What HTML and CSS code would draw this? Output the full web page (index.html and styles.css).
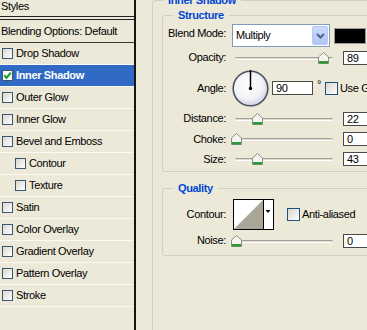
FILE: index.html
```html
<!DOCTYPE html>
<html>
<head>
<meta charset="utf-8">
<link rel="stylesheet" href="styles.css">
</head>
<body>
<div class="dlg">
  <div class="side">
    <div class="side-hdr">Styles</div>
    <ul class="list">
      <li class="row blend">Blending Options: Default</li>
      <li class="row"><span class="cb"></span>Drop Shadow</li>
      <li class="row sel"><span class="cb on"><svg width="9" height="9" viewBox="0 0 9 9"><path d="M1.2 4.2L3.6 6.8L7.8 1.6" fill="none" stroke="#22a022" stroke-width="2.2"/></svg></span>Inner Shadow</li>
      <li class="row"><span class="cb"></span>Outer Glow</li>
      <li class="row"><span class="cb"></span>Inner Glow</li>
      <li class="row"><span class="cb"></span>Bevel and Emboss</li>
      <li class="row sub"><span class="cb"></span>Contour</li>
      <li class="row sub"><span class="cb"></span>Texture</li>
      <li class="row"><span class="cb"></span>Satin</li>
      <li class="row"><span class="cb"></span>Color Overlay</li>
      <li class="row"><span class="cb"></span>Gradient Overlay</li>
      <li class="row"><span class="cb"></span>Pattern Overlay</li>
      <li class="row"><span class="cb"></span>Stroke</li>
    </ul>
  </div>
  <div class="main">
    <fieldset class="grp outer">
      <legend>Inner Shadow</legend>
      <fieldset class="grp struct">
        <legend>Structure</legend>
        <div class="frow r-blend">
          <span class="lbl">Blend Mode:</span>
          <div class="select"><span class="sel-val">Multiply</span><span class="sel-btn"><svg width="9" height="6" viewBox="0 0 9 6"><path d="M1 1L4.5 4.5L8 1" fill="none" stroke="#4d6185" stroke-width="2"/></svg></span></div>
          <span class="swatch"></span>
        </div>
        <div class="frow h21">
          <span class="lbl">Opacity:</span>
          <div class="slider"><div class="track"></div><span class="thumb" style="left:87px"><svg width="11" height="12" viewBox="0 0 11 12"><path d="M0.5 11.5V5L5.5 0.5L10.5 5V11.5Z" fill="#f5f5ef" stroke="#8c8c84"/><rect x="1" y="9" width="9" height="2.5" fill="#2e9a3a"/></svg></span></div>
          <span class="num">89</span>
        </div>
        <div class="frow h40">
          <span class="lbl">Angle:</span>
          <svg class="dial" width="37" height="37" viewBox="0 0 37 37"><defs><radialGradient id="dg" cx="45%" cy="42%" r="62%"><stop offset="0" stop-color="#ffffff"/><stop offset="0.65" stop-color="#f2f2f6"/><stop offset="1" stop-color="#c3c8da"/></radialGradient></defs><circle cx="18.5" cy="18.5" r="17.3" fill="url(#dg)" stroke="#4a5063" stroke-width="1.6"/><line x1="18.5" y1="18.5" x2="18.5" y2="0" stroke="#000" stroke-width="1.5"/><circle cx="18.5" cy="18.5" r="1.7" fill="#000"/></svg>
          <span class="num angle">90</span>
          <span class="deg">°</span>
          <span class="cb13"></span>
          <span class="cbl">Use Global Light</span>
        </div>
        <div class="frow h21">
          <span class="lbl">Distance:</span>
          <div class="slider"><div class="track"></div><span class="thumb" style="left:21px"><svg width="11" height="12" viewBox="0 0 11 12"><path d="M0.5 11.5V5L5.5 0.5L10.5 5V11.5Z" fill="#f5f5ef" stroke="#8c8c84"/><rect x="1" y="9" width="9" height="2.5" fill="#2e9a3a"/></svg></span></div>
          <span class="num">22</span>
        </div>
        <div class="frow h20">
          <span class="lbl">Choke:</span>
          <div class="slider"><div class="track"></div><span class="thumb" style="left:0px"><svg width="11" height="12" viewBox="0 0 11 12"><path d="M0.5 11.5V5L5.5 0.5L10.5 5V11.5Z" fill="#f5f5ef" stroke="#8c8c84"/><rect x="1" y="9" width="9" height="2.5" fill="#2e9a3a"/></svg></span></div>
          <span class="num">0</span>
        </div>
        <div class="frow h20">
          <span class="lbl">Size:</span>
          <div class="slider"><div class="track"></div><span class="thumb" style="left:21px"><svg width="11" height="12" viewBox="0 0 11 12"><path d="M0.5 11.5V5L5.5 0.5L10.5 5V11.5Z" fill="#f5f5ef" stroke="#8c8c84"/><rect x="1" y="9" width="9" height="2.5" fill="#2e9a3a"/></svg></span></div>
          <span class="num">43</span>
        </div>
      </fieldset>
      <fieldset class="grp quality">
        <legend>Quality</legend>
        <div class="frow h31">
          <span class="lbl">Contour:</span>
          <svg class="contour" width="41" height="31" viewBox="0 0 41 31"><rect x="0.5" y="0.5" width="40" height="30" fill="#fff" stroke="#000"/><polygon points="1,30 30,1 30,30" fill="#a9a597"/><line x1="30.5" y1="0" x2="30.5" y2="31" stroke="#000"/><polygon points="32.5,11 37.5,11 35,14" fill="#000"/></svg>
          <span class="cb13 aa"></span>
          <span class="cbl">Anti-aliased</span>
        </div>
        <div class="frow h21">
          <span class="lbl">Noise:</span>
          <div class="slider"><div class="track"></div><span class="thumb" style="left:0px"><svg width="11" height="12" viewBox="0 0 11 12"><path d="M0.5 11.5V5L5.5 0.5L10.5 5V11.5Z" fill="#f5f5ef" stroke="#8c8c84"/><rect x="1" y="9" width="9" height="2.5" fill="#2e9a3a"/></svg></span></div>
          <span class="num">0</span>
        </div>
      </fieldset>
    </fieldset>
  </div>
</div>
</body>
</html>
```

FILE: styles.css
```css
* { box-sizing: border-box; }
html, body { margin: 0; padding: 0; }
body {
  width: 367px;
  height: 330px;
  overflow: hidden;
  background: #ECE9D8;
  font-family: "Liberation Sans", Arial, sans-serif;
  font-size: 11px;
  line-height: 13px;
  letter-spacing: -0.35px;
  color: #000;
}
.dlg { display: flex; height: 330px; }

/* left styles list */
.side { width: 136px; flex: none; border-right: 2px solid #151515; }
.side-hdr { height: 17px; line-height: 12px; padding-left: 1px; border-bottom: 1px solid #222; }
.list { list-style: none; margin: 2px 0 0; padding: 0; border-top: 1px solid #222; }
.row {
  display: flex;
  align-items: center;
  height: 22px;
  padding-left: 2px;
  border-bottom: 1px solid #fbfaf4;
  white-space: nowrap;
}
.row.blend { height: 23px; padding-left: 1px; border-bottom-color: #3a3a3a; }
.row.sub { padding-left: 15px; }
.row.sel { background: #316AC5; color: #fff; font-weight: bold; }
.cb {
  flex: none;
  width: 11px;
  height: 11px;
  margin-right: 3px;
  border: 1px solid #3a5670;
  background: linear-gradient(135deg, #d9d7cc, #ffffff);
  display: flex;
  align-items: center;
  justify-content: center;
}
.cb.on { background: #fff; }

/* right panel */
.main { flex: 1; min-width: 0; padding-left: 16px; margin-top: -7px; }
.grp {
  margin: 0;
  min-width: 0;
  border: 1px solid #D0D0BF;
  border-radius: 3px;
  padding: 0;
}
.grp > legend {
  color: #0046D5;
  font-weight: bold;
  line-height: 14px;
  padding: 0 5px;
  margin-left: 10px;
}
.outer { width: 240px; height: 360px; padding: 1px 0 0 9px; }
.outer > legend { margin-left: 1px; }
.struct { width: 225px; padding: 2px 0 2px 0; }
.quality { width: 225px; margin-top: 9px; padding: 4px 0 4px 0; }

.frow { display: flex; align-items: center; white-space: nowrap; }
.h20 { height: 20px; }
.h21 { height: 21px; }
.h31 { height: 31px; }
.h40 { height: 40px; }
.lbl { flex: none; width: 63px; text-align: right; }

.r-blend { height: 23px; align-items: flex-start; }
.r-blend .lbl { padding-top: 3px; }
.select {
  flex: none;
  margin-left: 6px;
  width: 98px;
  height: 23px;
  border: 1px solid #7F9DB9;
  background: #fff;
  display: flex;
}
.sel-val { flex: 1; padding-left: 3px; line-height: 21px; }
.sel-btn {
  flex: none;
  width: 16px;
  margin: 1px;
  border-radius: 2px;
  background: linear-gradient(#cbd9fc, #b1c6f5);
  border: 1px solid #b7c9f3;
  display: flex;
  align-items: center;
  justify-content: center;
}
.swatch {
  flex: none;
  align-self: center;
  margin-left: 4px;
  width: 32px;
  height: 16px;
  border: 1px solid #9a9a9a;
  background: #000;
}

.slider { position: relative; flex: none; margin-left: 5px; width: 107px; height: 12px; }
.track {
  position: absolute;
  left: 4px;
  right: 5px;
  top: 5px;
  height: 3px;
  border-radius: 2px;
  border-top: 1px solid #a3a195;
  border-bottom: 1px solid #ffffff;
  background: #dedcd0;
}
.thumb { position: absolute; top: 0; width: 11px; height: 12px; display: block; }
.thumb svg { display: block; }

.num {
  flex: none;
  margin-left: 5px;
  width: 41px;
  height: 14px;
  border: 1px solid #4a4a4a;
  background: #fff;
  padding-left: 3px;
  line-height: 12px;
}
.dial { flex: none; margin-left: 6px; display: block; }
.num.angle { margin-left: 3px; }
.deg { flex: none; width: 12px; padding-left: 4px; margin-bottom: 8px; }
.cb13 {
  flex: none;
  width: 13px;
  height: 13px;
  border: 1px solid #1C5180;
  background: linear-gradient(135deg, #d9d7cc, #ffffff);
}
.cbl { margin-left: 2px; }
.contour { flex: none; margin-left: 7px; display: block; }
.cb13.aa { margin-left: 13px; }
```
